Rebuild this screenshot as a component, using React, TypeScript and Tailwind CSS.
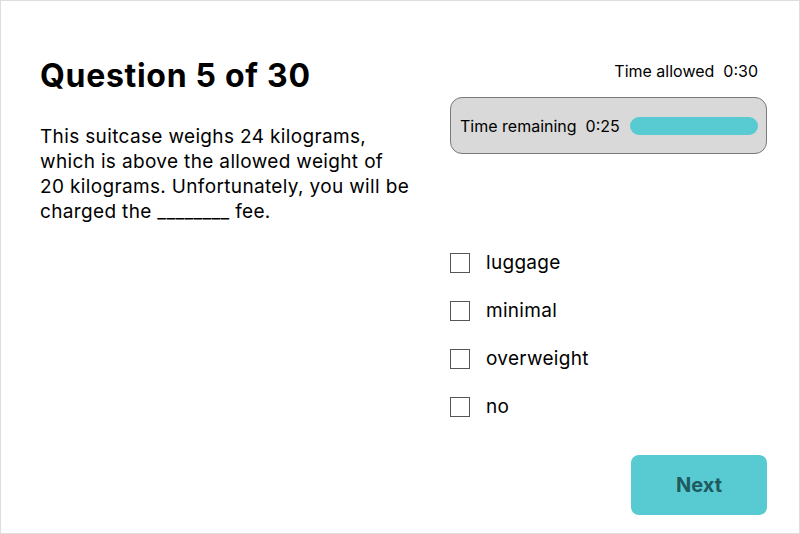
const options = ['luggage', 'minimal', 'overweight', 'no']

export default function App() {
  return (
    <div className="w-[800px] h-[534px] bg-white border border-[#dedede] flex pl-[39px] pt-[56px] font-['Inter',sans-serif] text-black">
      <div className="w-[410px]">
        <h1 className="text-[32px] leading-[38px] font-bold tracking-[0.7px]">Question 5 of 30</h1>
        <p className="mt-[29px] text-[19px] leading-[25px] tracking-[0.35px]">
          This suitcase weighs 24 kilograms,
          <br />
          which is above the allowed weight of
          <br />
          20 kilograms. Unfortunately, you will be
          <br />
          charged the ________ fee.
        </p>
      </div>
      <div className="w-[317px] flex flex-col">
        <div className="text-[16px] leading-[24px] text-right pr-[9px] pt-[2px]">Time allowed&nbsp; 0:30</div>
        <div className="mt-[14px] h-[57px] rounded-[12px] bg-[#d9d9d9] border border-[#7a7a7a] flex items-center gap-[10px] pl-[9px] pr-[8px]">
          <span className="text-[16px] leading-[24px] whitespace-nowrap">Time remaining&nbsp; 0:25</span>
          <div className="flex-1 h-[18px] rounded-full bg-[#58cbd2]" />
        </div>
        <div className="mt-[95px] flex flex-col gap-[20px]">
          {options.map((o) => (
            <label key={o} className="flex items-center gap-4 h-[28px]">
              <span className="w-[20px] h-[20px] border border-[#555] bg-white" />
              <span className="text-[19px] leading-[28px] tracking-[0.3px]">{o}</span>
            </label>
          ))}
        </div>
        <button className="mt-[34px] self-end w-[136px] h-[60px] rounded-[8px] bg-[#58cbd2] text-[#1e5a5e] text-[20px] font-bold">
          Next
        </button>
      </div>
    </div>
  )
}
